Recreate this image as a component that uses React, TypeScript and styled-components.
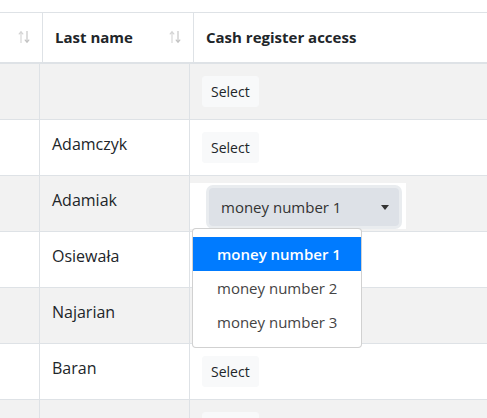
import React from 'react';
import styled, { createGlobalStyle } from 'styled-components';

const GlobalStyle = createGlobalStyle`
    html, body {
        margin: 0;
        padding: 0;
        background: #fff;
    }
    body {
        font-family: 'Open Sans', 'Liberation Sans', sans-serif;
        font-size: 16px;
        color: #212529;
    }
`;

const Page = styled.div`
    height: 100vh;
    overflow: hidden;
    padding-top: 12px;
    box-sizing: border-box;
`;

const HeaderRow = styled.div`
    display: grid;
    grid-template-columns: 43px 151px 1fr;
    border-top: 1px solid #dee2e6;
    border-bottom: 2px solid #dee2e6;
`;

const HeaderCell = styled.div`
    display: flex;
    align-items: center;
    justify-content: space-between;
    padding: 12px 12px 13px;
    line-height: 24px;
    font-size: 15px;
    font-weight: 700;
    white-space: nowrap;
    border-right: 1px solid #dee2e6;

    &:last-child {
        border-right: none;
    }
`;

const SortIcon = styled.svg`
    margin-left: auto;
    flex: none;
`;

const BodyRow = styled.div<{ $striped: boolean }>`
    display: grid;
    grid-template-columns: 40px 150px 1fr;
    border-bottom: 1px solid #dee2e6;
    background: ${p => (p.$striped ? '#f2f2f2' : '#fff')};
`;

const Cell = styled.div<{ $editing?: boolean }>`
    padding: ${p => (p.$editing ? '7px 0 2px 0' : '12px')};
    line-height: 24px;
    min-height: 31px;
    border-right: 1px solid #dee2e6;
    position: relative;

    &:last-child {
        border-right: none;
    }
`;

const SelectButton = styled.button`
    display: inline-block;
    font-family: inherit;
    font-size: 14px;
    line-height: 21px;
    padding: 4px 8px;
    border: 1px solid #f8f9fa;
    border-radius: 3px;
    background: #f8f9fa;
    color: #212529;
    cursor: pointer;
`;

const Editor = styled.div`
    position: relative;
    width: 216px;
    height: 46px;
    box-sizing: border-box;
    background: #fff;
    padding: 5px 7px 3px 19px;
    z-index: 5;
`;

const SelectControl = styled.div`
    display: flex;
    align-items: center;
    justify-content: space-between;
    height: 38px;
    box-sizing: border-box;
    padding: 0 10px 0 12px;
    border-radius: 4px;
    background: #dde1e7;
    box-shadow: 0 0 0 3px #e9ecef;
    color: #333;
    font-size: 15px;
`;

const Caret = styled.span`
    width: 0;
    height: 0;
    border-left: 4px solid transparent;
    border-right: 4px solid transparent;
    border-top: 5px solid #333;
`;

const Menu = styled.div`
    position: absolute;
    top: 45px;
    left: 2px;
    width: 170px;
    box-sizing: border-box;
    padding: 8px 0;
    background: #fff;
    border: 1px solid rgba(0, 0, 0, 0.18);
    border-radius: 4px;
    z-index: 10;
`;

const MenuItem = styled.div<{ $active?: boolean }>`
    height: 34px;
    line-height: 34px;
    padding: 0 24px;
    font-size: 15px;
    white-space: nowrap;
    color: ${p => (p.$active ? '#fff' : '#444')};
    background: ${p => (p.$active ? '#007bff' : 'transparent')};
    font-weight: ${p => (p.$active ? 600 : 400)};
`;

const Sort = () => (
    <SortIcon width="12" height="14" viewBox="0 0 12 14">
        <path d="M3 13V2M0.8 4.3L3 1.6l2.2 2.7" stroke="#d4d4d4" strokeWidth="1.1" fill="none" />
        <path d="M9 1v11M6.8 9.7L9 12.4l2.2-2.7" stroke="#c2c2c2" strokeWidth="1.1" fill="none" />
    </SortIcon>
);

const options = ['money number 1', 'money number 2', 'money number 3'];

const rows = [
    { lastName: '' },
    { lastName: 'Adamczyk' },
    { lastName: 'Adamiak', editing: true },
    { lastName: 'Osiewała' },
    { lastName: 'Najarian' },
    { lastName: 'Baran' },
    { lastName: '' }
];

export default function App() {
    return (
        <Page>
            <GlobalStyle />
            <HeaderRow>
                <HeaderCell>
                    <Sort />
                </HeaderCell>
                <HeaderCell>
                    <span>Last name</span>
                    <Sort />
                </HeaderCell>
                <HeaderCell>Cash register access</HeaderCell>
            </HeaderRow>
            {rows.map((row, i) => (
                <BodyRow key={i} $striped={i % 2 === 0}>
                    <Cell />
                    <Cell>{row.lastName}</Cell>
                    {row.editing ? (
                        <Cell $editing>
                            <Editor>
                                <SelectControl>
                                    <span>{options[0]}</span>
                                    <Caret />
                                </SelectControl>
                                <Menu>
                                    {options.map((o, j) => (
                                        <MenuItem key={o} $active={j === 0}>
                                            {o}
                                        </MenuItem>
                                    ))}
                                </Menu>
                            </Editor>
                        </Cell>
                    ) : (
                        <Cell>
                            <SelectButton>Select</SelectButton>
                        </Cell>
                    )}
                </BodyRow>
            ))}
        </Page>
    );
}
